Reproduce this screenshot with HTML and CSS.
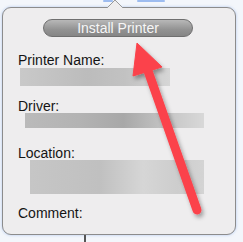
FILE: index.html
```html
<!DOCTYPE html>
<html lang="en">
<head>
<meta charset="UTF-8">
<title>Install Printer</title>
<link rel="stylesheet" href="styles.css">
</head>
<body>

<div class="popover">
  <button class="install">Install Printer</button>

  <div class="label first">Printer Name:</div>
  <div class="field name"></div>

  <div class="label">Driver:</div>
  <div class="field driver"></div>

  <div class="label location">Location:</div>
  <div class="field place"></div>

  <div class="label comment">Comment:</div>
</div>

<!-- popover tip, stray window bits and the callout arrow -->
<svg class="overlay" width="243" height="242" viewBox="0 0 243 242">
  <defs>
    <filter id="shadow" x="-20%" y="-20%" width="150%" height="150%">
      <feDropShadow dx="2" dy="3" stdDeviation="2" flood-color="#000" flood-opacity="0.35"/>
    </filter>
  </defs>
  <rect x="103" y="0" width="10" height="2" rx="1" fill="#9dbcf0"/>
  <rect x="137" y="0" width="28" height="2" rx="1" fill="#9dbcf0"/>
  <path d="M107 8 L115 0 L123 8 Z" fill="#eeedee"/>
  <path d="M107 8 L115 0 L123 8" fill="none" stroke="#9a9a9a" stroke-width="1"/>
  <rect x="84" y="235" width="2" height="7" fill="#555"/>
  <g filter="url(#shadow)" fill="#fb434b" stroke="#fb434b">
    <line x1="147" y1="68" x2="197" y2="210" stroke-width="9" stroke-linecap="round"/>
    <path d="M137 43 L162 67 L133 76 Z" stroke-width="1" stroke-linejoin="round"/>
  </g>
</svg>

</body>
</html>
```

FILE: styles.css
```css
* {
  box-sizing: border-box;
}

body {
  margin: 0;
  width: 243px;
  height: 242px;
  overflow: hidden;
  background-color: #f3f6fb;
  font-family: 'Liberation Sans', Arial, sans-serif;
  color: #141414;
}

/* The popover panel */
.popover {
  margin: 7px 0 0 2px;
  width: 234px;
  height: 228px;
  padding: 11px 0 0 15px;
  background-color: #eeedee;
  border: 1px solid #8c8c8c;
  border-radius: 9px;
  box-shadow: 0 0 3px rgba(120, 160, 230, 0.55);
}

.install {
  display: block;
  margin: 0 0 0 25px;
  width: 150px;
  height: 18px;
  padding: 0;
  border: 1px solid #6f6f6f;
  border-radius: 9px;
  background: linear-gradient(#b8b8b8, #929292 60%, #868686);
  color: #f6f6f6;
  font-family: 'Liberation Sans', Arial, sans-serif;
  font-size: 14px;
  line-height: 16px;
}

.label {
  font-size: 14px;
  line-height: 16px;
  margin-top: 12px;
}

.label.first {
  margin-top: 15px;
}

.label.location {
  margin-top: 17px;
}

.label.comment {
  margin-top: 11px;
}

/* Blurred-out values */
.field {
  filter: blur(0.6px);
}

.name {
  margin-left: 2px;
  width: 150px;
  height: 18px;
  background: linear-gradient(90deg, #c9c9c9, #bcbcbc 45%, #c2c2c2 70%, #d6d6d6);
}

.driver {
  margin: -1px 0 0 7px;
  width: 179px;
  height: 15px;
  background: linear-gradient(90deg, #bababa, #b3b3b3 30%, #a8a8a8 55%, #c6c6c6 80%, #d8d8d8);
}

.place {
  margin: -1px 0 0 12px;
  width: 174px;
  height: 34px;
  background: linear-gradient(90deg, #c6c6c6, #c0c0c0 40%, #d6d6d6 65%, #cdcdcd 85%, #d4d4d4);
}

.overlay {
  position: absolute;
  left: 0;
  top: 0;
}
```
